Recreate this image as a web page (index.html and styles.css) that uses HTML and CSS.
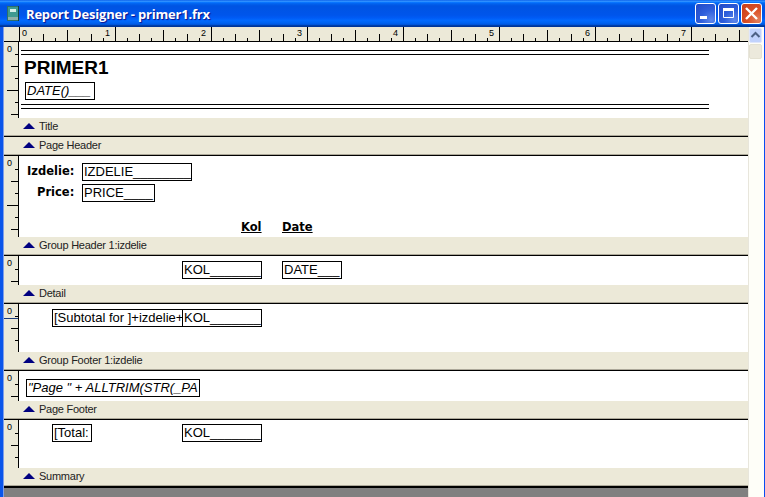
FILE: index.html
```html
<!DOCTYPE html>
<html lang="en">
<head>
  <meta charset="UTF-8" />
  <title>Report Designer - primer1.frx</title>
  <link rel="stylesheet" href="styles.css">
</head>
<body>
  <div class="window">
    <div class="titlebar">
      <svg class="app-icon" width="12" height="15" viewBox="0 0 12 15">
        <rect x="0" y="0" width="12" height="15" fill="#2f6f6a"/>
        <rect x="1" y="1" width="10" height="10" fill="#3f9a90"/>
        <rect x="3" y="3" width="6" height="3" fill="#d6efe8"/>
        <rect x="1" y="11" width="10" height="3" fill="#8fb0a8"/>
        <rect x="11" y="0" width="1" height="15" fill="#16403d"/>
      </svg>
      <span class="title-text">Report Designer - primer1.frx</span>
      <div class="win-btns">
        <div class="win-btn">
          <svg width="21" height="21" viewBox="0 0 21 21"><rect x="5" y="13" width="7" height="3" fill="#fff"/></svg>
        </div>
        <div class="win-btn">
          <svg width="21" height="21" viewBox="0 0 21 21"><path d="M5.5 5.5h10v9h-10z" fill="none" stroke="#fff"/><rect x="5" y="5" width="11" height="3" fill="#fff"/></svg>
        </div>
        <div class="win-btn close">
          <svg width="21" height="21" viewBox="0 0 21 21"><path d="M5 5l11 11M16 5L5 16" stroke="#fff" stroke-width="2.4" fill="none"/></svg>
        </div>
      </div>
    </div>

    <div class="client">
      <div class="designer">
        <div class="hruler">
          <span class="zero">0</span>
          <span class="first">1</span>
          <span>2</span>
          <span>3</span>
          <span>4</span>
          <span>5</span>
          <span>6</span>
          <span>7</span>
        </div>

        <div class="sec sec-title">
          <div class="vruler early">0</div>
          <div class="canvas">
            <div class="dbl-line line-a"></div>
            <div class="heading">PRIMER1</div>
            <div class="field italic f-date">DATE()___</div>
            <div class="dbl-line line-b"></div>
          </div>
        </div>
        <div class="band"><i class="arrow"></i>Title</div>

        <div class="band"><i class="arrow"></i>Page Header</div>

        <div class="sec sec-group-head">
          <div class="vruler">0</div>
          <div class="canvas">
            <div class="label l-izdelie">Izdelie:</div>
            <div class="field f-izdelie">IZDELIE________</div>
            <div class="label l-price">Price:</div>
            <div class="field f-price">PRICE____</div>
            <div class="label under l-kol">Kol</div>
            <div class="label under l-date">Date</div>
          </div>
        </div>
        <div class="band"><i class="arrow"></i>Group Header 1:izdelie</div>

        <div class="sec sec-detail">
          <div class="vruler">0</div>
          <div class="canvas">
            <div class="field f-kol">KOL_______</div>
            <div class="field f-datev">DATE___</div>
          </div>
        </div>
        <div class="band"><i class="arrow"></i>Detail</div>

        <div class="sec sec-group-foot">
          <div class="vruler early marked">0</div>
          <div class="canvas">
            <div class="field f-subtotal">[Subtotal for ]+izdelie+</div>
            <div class="field f-kol">KOL_______</div>
          </div>
        </div>
        <div class="band"><i class="arrow"></i>Group Footer 1:izdelie</div>

        <div class="sec sec-page-foot">
          <div class="vruler">0</div>
          <div class="canvas">
            <div class="field italic f-page">"Page " + ALLTRIM(STR(_PA</div>
          </div>
        </div>
        <div class="band"><i class="arrow"></i>Page Footer</div>

        <div class="sec sec-summary">
          <div class="vruler">0</div>
          <div class="canvas">
            <div class="field f-total">[Total:</div>
            <div class="field f-kol f-kol-sum">KOL_______</div>
          </div>
        </div>
        <div class="band band-last"><i class="arrow"></i>Summary</div>
      </div>

      <div class="scrollbar">
        <div class="scroll-up">
          <svg width="13" height="15" viewBox="0 0 13 15"><path d="M2.5 9l4-4 4 4" fill="none" stroke="#4d6185" stroke-width="2"/></svg>
        </div>
        <div class="scroll-thumb"></div>
      </div>
    </div>
  </div>
</body>
</html>
```

FILE: styles.css
```css
html, body {
  margin: 0;
  height: 100%;
  overflow: hidden;
}
body {
  font-family: 'Liberation Sans', Arial, sans-serif;
  background: #808080;
}
.window {
  width: 765px;
  height: 497px;
  display: flex;
  flex-direction: column;
  overflow: hidden;
}

/* title bar */
.titlebar {
  height: 27px;
  flex: none;
  display: flex;
  align-items: center;
  padding: 0 3px 0 7px;
  box-sizing: border-box;
  background: linear-gradient(to bottom, #0058e6 0%, #3a93ff 4%, #288eff 6%, #127dff 8%, #036ffc 10%, #0262ee 14%, #0057e5 20%, #0054e3 24%, #0055eb 56%, #005bf5 66%, #026afe 76%, #0062ef 86%, #0052d6 92%, #0040ab 94%, #003092 100%);
}
.app-icon {
  flex: none;
}
.title-text {
  margin-left: 7px;
  color: #fff;
  font: bold 13px 'Open Sans', sans-serif;
  letter-spacing: -0.2px;
  text-shadow: 1px 1px 1px #0f1089;
}
.win-btns {
  margin-left: auto;
  display: flex;
  gap: 2px;
}
.win-btn {
  width: 21px;
  height: 21px;
  box-sizing: border-box;
  border: 1px solid #fff;
  border-radius: 3px;
  background: radial-gradient(circle at 80% 85%, #5f88ea 0%, #2f5fdc 45%, #2148c4 100%);
  overflow: hidden;
}
.win-btn svg {
  display: block;
  margin: -1px;
}
.win-btn.close {
  background: radial-gradient(circle at 85% 85%, #e2805e 0%, #dc5026 45%, #c63f1c 100%);
}

.client {
  flex: 1;
  display: flex;
  padding-left: 4px;
  background: linear-gradient(to right, #0a55ea 3px, #7f9ee8 3px);
  border-right: 1px solid #0a4cf0;
}
.designer {
  width: 744px;
  flex: none;
  background: #808080;
}

/* rulers */
.hruler {
  height: 15px;
  box-sizing: border-box;
  border-bottom: 1px solid #000;
  display: flex;
  font-size: 9px;
  line-height: 13px;
  color: #000;
  background-color: #ece9d8;
  background-image:
    repeating-linear-gradient(to right, #000 0, #000 1px, transparent 1px, transparent 24px),
    repeating-linear-gradient(to right, #000 0, #000 1px, transparent 1px, transparent 48px),
    repeating-linear-gradient(to right, #000 0, #000 1px, transparent 1px, transparent 96px),
    repeating-linear-gradient(to right, #000 0, #000 1px, transparent 1px, transparent 96px);
  background-repeat: no-repeat;
  background-size: 100% 3px, 100% 7px, 100% 11px, 100% 14px;
  background-position: 27px 11px, 39px 7px, 63px 3px, 15px 0;
}
.hruler span {
  width: 96px;
  flex: none;
  text-align: right;
}
.hruler .zero {
  width: 5px;
  margin-left: 18px;
  text-align: left;
}
.hruler .first {
  width: 83px;
}
.vruler {
  position: relative;
  width: 15px;
  flex: none;
  box-sizing: border-box;
  border-right: 1px solid #000;
  padding: 3px 0 0 3px;
  font-size: 9px;
  line-height: 9px;
  color: #000;
  background-color: #ece9d8;
  background-image:
    repeating-linear-gradient(to bottom, #000 0, #000 1px, transparent 1px, transparent 24px),
    repeating-linear-gradient(to bottom, #000 0, #000 1px, transparent 1px, transparent 48px),
    repeating-linear-gradient(to bottom, #000 0, #000 1px, transparent 1px, transparent 48px);
  background-repeat: no-repeat;
  background-size: 3px 100%, 7px 100%, 11px 100%;
  background-position: right 0 top 13px, right 0 top 25px, right 0 top 49px;
}
.vruler.early {
  background-position: right 0 top 12px, right 0 top 24px, right 0 top 48px;
}
.vruler.marked::after {
  content: "";
  position: absolute;
  left: 0;
  right: 0;
  top: 14px;
  height: 1px;
  background: #1a3a7a;
}

/* report sections */
.sec {
  display: flex;
  background: #fff;
}
.sec-title { height: 76px; }
.sec-group-head { height: 81px; }
.sec-detail { height: 29px; }
.sec-group-foot { height: 48px; }
.sec-page-foot { height: 30px; }
.sec-summary { height: 48px; }
.canvas {
  position: relative;
  flex: 1;
  overflow: hidden;
}
.band {
  height: 19px;
  box-sizing: border-box;
  display: flex;
  align-items: center;
  padding: 0 0 3px 19px;
  font-size: 11px;
  letter-spacing: -0.25px;
  color: #222;
  background: #ece9d8;
  border-bottom: 1px solid #000;
  box-shadow: inset 0 -1px 0 #aca899;
}
.band-last {
  box-shadow: inset 0 -1px 0 #aca899, 0 1px 0 #000;
}
.arrow {
  width: 0;
  height: 0;
  margin-right: 4px;
  border-left: 6px solid transparent;
  border-right: 6px solid transparent;
  border-bottom: 6px solid #000080;
}

/* report objects */
.dbl-line {
  position: absolute;
  left: 2px;
  width: 688px;
  height: 3px;
  border-top: 1px solid #000;
  border-bottom: 1px solid #000;
}
.line-a { top: 8px; }
.line-b { top: 62px; }
.heading {
  position: absolute;
  left: 5px;
  top: 14px;
  font-size: 19px;
  font-weight: bold;
  line-height: 24px;
  color: #000;
}
.field {
  position: absolute;
  box-sizing: border-box;
  height: 18px;
  padding-left: 1px;
  border: 1px solid #000;
  background: #fff;
  font-size: 13px;
  line-height: 16px;
  color: #000;
  white-space: nowrap;
  overflow: hidden;
}
.italic { font-style: italic; }
.f-date { left: 6px; top: 40px; width: 70px; }
.f-izdelie { left: 63px; top: 7px; width: 110px; }
.f-price { left: 63px; top: 28px; width: 73px; }
.f-kol { left: 163px; top: 5px; width: 80px; }
.f-kol-sum { top: 4px; }
.f-datev { left: 263px; top: 5px; width: 60px; }
.f-subtotal { left: 33px; top: 5px; width: 131px; }
.f-page { left: 7px; top: 8px; width: 174px; }
.f-total { left: 33px; top: 4px; width: 40px; }
.label {
  position: absolute;
  font: bold 11.5px/16px 'DejaVu Sans', sans-serif;
  color: #000;
  white-space: nowrap;
}
.under { text-decoration: underline; }
.l-izdelie { left: 8px; top: 7px; }
.l-price { left: 18px; top: 28px; }
.l-kol { left: 222px; top: 63px; }
.l-date { left: 263px; top: 63px; }

/* scrollbar */
.scrollbar {
  flex: 1;
  padding: 1px 2px 0 0;
  background: #fefef8;
  border-left: 1px solid #e8e6dc;
}
.scroll-up {
  height: 15px;
  border-radius: 2px;
  background: #c1d2fc;
  box-sizing: border-box;
  border: 1px solid #dfe6fb;
}
.scroll-up svg {
  display: block;
  margin: -1px;
}
.scroll-thumb {
  height: 15px;
  margin-top: 1px;
  box-sizing: border-box;
  border: 1px solid #e4e1d2;
  border-radius: 2px;
  background: #ece9dc;
}
```
